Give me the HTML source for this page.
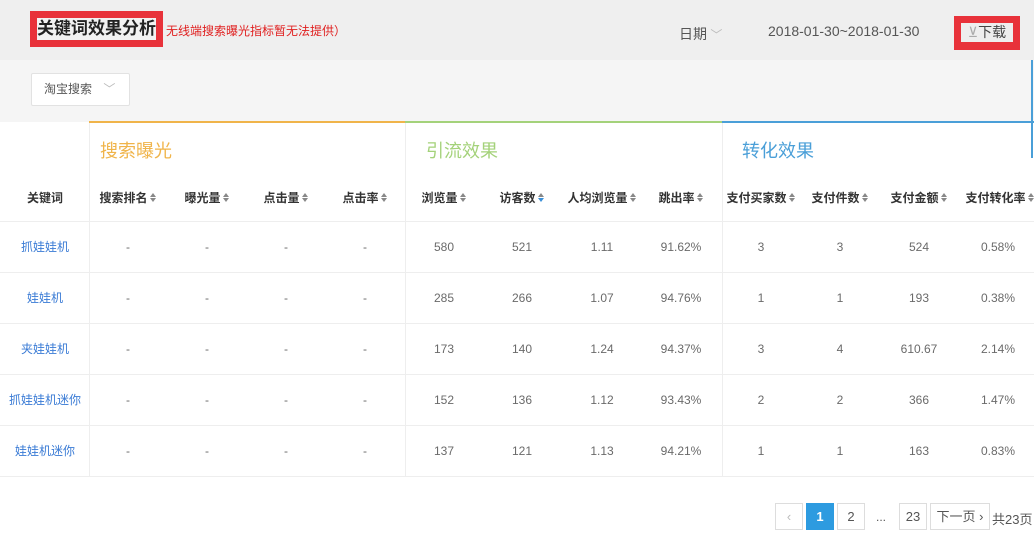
<!DOCTYPE html><html><head><meta charset="utf-8"><style>
*{margin:0;padding:0;box-sizing:border-box}
body{width:1034px;height:560px;overflow:hidden;background:#fff;font-family:"Liberation Sans","Noto Sans CJK SC",sans-serif;position:relative;color:#333}
.a{position:absolute}
.c{position:absolute;text-align:center;width:80px;font-size:12px;color:#6a6a6a}
.h{font-weight:bold;color:#333}
.s{display:inline-block;width:7px;height:10px;vertical-align:-1px;margin-left:2px;position:relative}
.s:before{content:"";position:absolute;left:0;top:0;border:3.5px solid transparent;border-bottom:4px solid #888;border-top:0}
.s:after{content:"";position:absolute;left:0;top:5px;border:3.5px solid transparent;border-top:4px solid #888;border-bottom:0}
.s.b:after{border-top-color:#3a8fd8}
.k{color:#3a7bd5}
.pg{position:absolute;top:503px;height:27px;border:1px solid #ddd;font-size:13px;color:#555;text-align:center;line-height:25px;background:#fff}
</style></head><body>
<div class="a" style="left:0;top:0;width:1034px;height:60px;background:#efefef"></div>
<div class="a" style="left:0;top:60px;width:1034px;height:62px;background:#f5f5f5"></div>
<div class="a" style="left:30px;top:11px;width:133px;height:36px;background:#e8323a"></div>
<div class="a" style="left:37px;top:18px;width:119px;height:22px;background:#f2f2f2;font-size:17px;font-weight:bold;color:#222;line-height:22px;text-align:center">关键词效果分析</div>
<div class="a" style="left:166px;top:22px;font-size:12px;color:#e02020;font-weight:normal">无线端搜索曝光指标暂无法提供）</div>
<div class="a" style="left:679px;top:24px;font-size:14px;color:#555">日期<span style="color:#bbb;font-size:12px"> ﹀</span></div>
<div class="a" style="left:768px;top:23px;font-size:14px;color:#555">2018-01-30~2018-01-30</div>
<div class="a" style="left:954px;top:16px;width:66px;height:34px;background:#e8323a"></div>
<div class="a" style="left:961px;top:23px;width:52px;height:19px;background:#eee;font-size:14px;color:#444;line-height:19px;text-align:center"><span style="color:#aaa">⊻</span>下载</div>
<div class="a" style="left:31px;top:73px;width:99px;height:33px;background:#fff;border:1px solid #e2e2e2;border-radius:2px;font-size:12px;color:#555;line-height:31px;padding-left:12px">淘宝搜索 <span style="color:#bbb;margin-left:8px">﹀</span></div>
<div class="a" style="left:89px;top:121px;width:316px;height:2px;background:#f0b44a"></div>
<div class="a" style="left:405px;top:121px;width:317px;height:2px;background:#a4d27a"></div>
<div class="a" style="left:722px;top:121px;width:312px;height:2px;background:#4a9fd8"></div>
<div class="a" style="left:1031px;top:60px;width:2px;height:98px;background:#4a9fd8"></div>
<div class="a" style="left:89px;top:123px;width:1px;height:353px;background:#eee"></div>
<div class="a" style="left:405px;top:123px;width:1px;height:353px;background:#eee"></div>
<div class="a" style="left:722px;top:123px;width:1px;height:353px;background:#eee"></div>
<div class="a" style="left:100px;top:137px;font-size:18px;color:#f0b44a">搜索曝光</div>
<div class="a" style="left:426px;top:137px;font-size:18px;color:#a4d27a">引流效果</div>
<div class="a" style="left:742px;top:137px;font-size:18px;color:#4a9fd8">转化效果</div>
<div class="a" style="left:0;top:221px;width:1034px;height:1px;background:#eee"></div>
<div class="a" style="left:0;top:272px;width:1034px;height:1px;background:#eee"></div>
<div class="a" style="left:0;top:323px;width:1034px;height:1px;background:#eee"></div>
<div class="a" style="left:0;top:374px;width:1034px;height:1px;background:#eee"></div>
<div class="a" style="left:0;top:425px;width:1034px;height:1px;background:#eee"></div>
<div class="a" style="left:0;top:476px;width:1034px;height:1px;background:#eee"></div>
<div style="position:absolute;top:189px;left:0;width:1034px">
<div class="c h" style="left:5px">关键词</div>
<div class="c h" style="left:88px">搜索排名<i class="s"></i></div>
<div class="c h" style="left:167px">曝光量<i class="s"></i></div>
<div class="c h" style="left:246px">点击量<i class="s"></i></div>
<div class="c h" style="left:325px">点击率<i class="s"></i></div>
<div class="c h" style="left:404px">浏览量<i class="s"></i></div>
<div class="c h" style="left:482px">访客数<i class="s b"></i></div>
<div class="c h" style="left:560px;width:84px">人均浏览量<i class="s"></i></div>
<div class="c h" style="left:641px">跳出率<i class="s"></i></div>
<div class="c h" style="left:721px">支付买家数<i class="s"></i></div>
<div class="c h" style="left:800px">支付件数<i class="s"></i></div>
<div class="c h" style="left:879px">支付金额<i class="s"></i></div>
<div class="c h" style="left:958px;width:84px">支付转化率<i class="s"></i></div>
</div>
<div id="rows"></div>
<script>
var d=[["抓娃娃机","580","521","1.11","91.62%","3","3","524","0.58%"],["娃娃机","285","266","1.07","94.76%","1","1","193","0.38%"],["夹娃娃机","173","140","1.24","94.37%","3","4","610.67","2.14%"],["抓娃娃机迷你","152","136","1.12","93.43%","2","2","366","1.47%"],["娃娃机迷你","137","121","1.13","94.21%","1","1","163","0.83%"]];
var xs=[5,88,167,246,325,404,482,562,641,721,800,879,958],h="";
d.forEach(function(r,i){var y=240+i*51;var v=[r[0],"-","-","-","-"].concat(r.slice(1));
v.forEach(function(t,j){h+='<div class="c'+(j==0?' k':'')+'" style="left:'+xs[j]+'px;top:'+(j==0?y-2:y)+'px">'+t+'</div>';});});
document.getElementById("rows").innerHTML=h;
</script>
<div class="pg" style="left:775px;width:28px;color:#bbb">‹</div>
<div class="pg" style="left:806px;width:28px;background:#2d9be0;border-color:#2d9be0;color:#fff;font-weight:bold">1</div>
<div class="pg" style="left:837px;width:28px">2</div>
<div class="a" style="left:876px;top:510px;font-size:12px;color:#555">...</div>
<div class="pg" style="left:899px;width:28px">23</div>
<div class="pg" style="left:930px;width:60px">下一页 ›</div>
<div class="a" style="left:992px;top:509px;font-size:13px;color:#555">共23页</div>
</body></html>
